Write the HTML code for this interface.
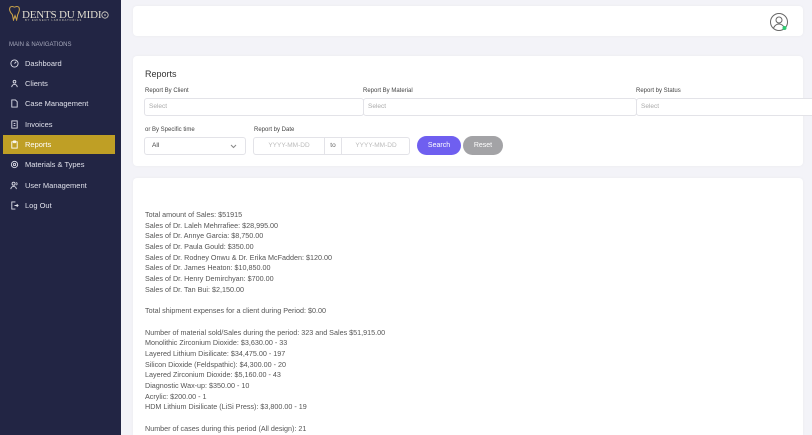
<!DOCTYPE html>
<html><head><meta charset="utf-8"><style>
*{box-sizing:border-box;margin:0;padding:0}
html,body{width:812px;height:435px;overflow:hidden}
body{background:#f3f3f8;font-family:"Liberation Sans",sans-serif;position:relative}
.sb{position:absolute;left:0;top:0;width:121px;height:435px;background:#222544;color:#d8d9e6}
.logo{position:absolute;left:8px;top:5px;color:#e0dccf;font-family:"Liberation Serif",serif;font-size:11px;letter-spacing:-0.2px;white-space:nowrap}
.logo small{position:absolute;left:17px;top:14px;font-size:2.6px;letter-spacing:0.9px;font-family:"Liberation Sans",sans-serif;color:#c9c4b5}
.sec{position:absolute;left:9px;top:42px;font-size:6px;color:#a6a8bb}
.it{position:absolute;left:3px;width:112px;height:19px;font-size:7.5px;display:flex;align-items:center;padding-left:7px;color:#dfe0ea}
.it svg{width:9px;height:9px;margin-right:6px;stroke:#dfe0ea;fill:none;stroke-width:1}
.it.act{background:#bf9f25;color:#fff}
.card{position:absolute;left:133px;width:670px;background:#fff;border-radius:4px;box-shadow:0 0 3px rgba(0,0,0,.04)}
.lbl{position:absolute;font-size:6px;color:#444}
.inp{position:absolute;height:18px;border:1px solid #e3e3e8;border-radius:3px;font-size:6.5px;color:#aaa;padding-left:4px;line-height:16px;background:#fff}
.btn{position:absolute;height:19px;border-radius:9.5px;color:#fff;font-size:7px;text-align:center;line-height:19px}
.rep{position:absolute;left:145px;top:210px;font-size:7.2px;line-height:10.68px;color:#555}
</style></head><body>
<div class="sb">
<div class="logo"><svg width="13" height="16" viewBox="0 0 12 15" style="vertical-align:-3px;margin-right:1px"><path d="M2 2c2-1.5 3 0 4 0s2-1.5 4 0c1.5 2 0 5-1 7l-1 5-1.5-4-1.5 4-1-5C2 7 0.5 4 2 2z" fill="none" stroke="#c9a24a" stroke-width="1"/></svg>DENTS DU MIDI<svg width="8" height="8" viewBox="0 0 10 10" style="vertical-align:-1px"><circle cx="5" cy="5" r="4" fill="none" stroke="#e0dccf"/><circle cx="5" cy="5" r="1" fill="#e0dccf"/></svg><small>BY EMINENT LABORATORIES</small></div>
<div class="sec">MAIN &amp; NAVIGATIONS</div>
<div class="it" style="top:54px"><svg viewBox="0 0 10 10"><circle cx="5" cy="5" r="4"/><path d="M5 5l2-2"/></svg>Dashboard</div>
<div class="it" style="top:74px"><svg viewBox="0 0 10 10"><circle cx="5" cy="3" r="1.5"/><path d="M2 9c0-2 1.5-3 3-3s3 1 3 3"/></svg>Clients</div>
<div class="it" style="top:94px"><svg viewBox="0 0 10 10"><path d="M2 1h4l2 2v6H2z"/></svg>Case Management</div>
<div class="it" style="top:115px"><svg viewBox="0 0 10 10"><rect x="2" y="1" width="6" height="8"/><path d="M4 4h2M4 6h2"/></svg>Invoices</div>
<div class="it act" style="top:135px"><svg viewBox="0 0 10 10" style="stroke:#fff"><rect x="2" y="2" width="6" height="7"/><path d="M4 1h2v2H4z"/></svg>Reports</div>
<div class="it" style="top:155px"><svg viewBox="0 0 10 10"><circle cx="5" cy="5" r="3.5"/><circle cx="5" cy="5" r="1.3"/></svg>Materials &amp; Types</div>
<div class="it" style="top:176px"><svg viewBox="0 0 10 10"><circle cx="4" cy="3" r="1.7"/><path d="M1 9c0-2 1.5-3 3-3s3 1 3 3M7 1.5a1.7 1.7 0 010 3"/></svg>User Management</div>
<div class="it" style="top:196px"><svg viewBox="0 0 10 10"><path d="M6 1H2v8h4M5 5h4M7.5 3.5L9 5 7.5 6.5"/></svg>Log Out</div>
</div>
<div class="card" style="top:6px;height:30px"><svg style="position:absolute;left:636px;top:6px" width="20" height="20" viewBox="0 0 20 20"><circle cx="10" cy="10" r="8.5" fill="none" stroke="#666" stroke-width="1"/><circle cx="10" cy="8" r="3" fill="none" stroke="#666"/><path d="M4.5 16c1.5-3 3.5-4 5.5-4s4 1 5.5 4" fill="none" stroke="#666"/><circle cx="15.5" cy="16" r="2" fill="#2ecc71"/></svg></div>
<div class="card" style="top:56px;height:110px"></div>
<div style="position:absolute;left:145px;top:69px;font-size:9px;color:#333">Reports</div>
<div class="lbl" style="left:145px;top:88px">Report By Client</div>
<div class="lbl" style="left:363px;top:88px">Report By Material</div>
<div class="lbl" style="left:636px;top:88px">Report by Status</div>
<div class="inp" style="left:144px;top:98px;width:220px">Select</div>
<div class="inp" style="left:363px;top:98px;width:274px">Select</div>
<div class="inp" style="left:636px;top:98px;width:180px">Select</div>
<div class="lbl" style="left:145px;top:127px">or By Specific time</div>
<div class="lbl" style="left:254px;top:127px">Report by Date</div>
<div class="inp" style="left:144px;top:137px;width:102px;color:#444;padding-left:7px">All<svg style="position:absolute;right:8px;top:6px" width="7" height="5" viewBox="0 0 7 5"><path d="M1 1l2.5 2.5L6 1" fill="none" stroke="#888"/></svg></div>
<div class="inp" style="left:253px;top:137px;width:157px;padding:0;color:#bbb"><span style="position:absolute;left:0;width:70px;text-align:center">YYYY-MM-DD</span><span style="position:absolute;left:70px;width:18px;border-left:1px solid #e3e3e8;border-right:1px solid #e3e3e8;height:16px;text-align:center;color:#666">to</span><span style="position:absolute;left:88px;width:68px;text-align:center">YYYY-MM-DD</span></div>
<div class="btn" style="left:417px;top:136px;width:44px;background:#6f5ff0">Search</div>
<div class="btn" style="left:463px;top:136px;width:40px;background:#a3a3a6">Reset</div>
<div class="card" style="top:178px;height:257px;border-radius:4px 4px 0 0"></div>
<div class="rep">Total amount of Sales: $51915<br>Sales of Dr. Laleh Mehrrafiee: $28,995.00<br>Sales of Dr. Annye Garcia: $8,750.00<br>Sales of Dr. Paula Gould: $350.00<br>Sales of Dr. Rodney Onwu &amp; Dr. Erika McFadden: $120.00<br>Sales of Dr. James Heaton: $10,850.00<br>Sales of Dr. Henry Demirchyan: $700.00<br>Sales of Dr. Tan Bui: $2,150.00<br><br>Total shipment expenses for a client during Period: $0.00<br><br>Number of material sold/Sales during the period: 323 and Sales $51,915.00<br>Monolithic Zirconium Dioxide: $3,630.00 - 33<br>Layered Lithium Disilicate: $34,475.00 - 197<br>Silicon Dioxide (Feldspathic): $4,300.00 - 20<br>Layered Zirconium Dioxide: $5,160.00 - 43<br>Diagnostic Wax-up: $350.00 - 10<br>Acrylic: $200.00 - 1<br>HDM Lithium Disilicate (LiSi Press): $3,800.00 - 19<br><br>Number of cases during this period (All design): 21</div>
</body></html>
